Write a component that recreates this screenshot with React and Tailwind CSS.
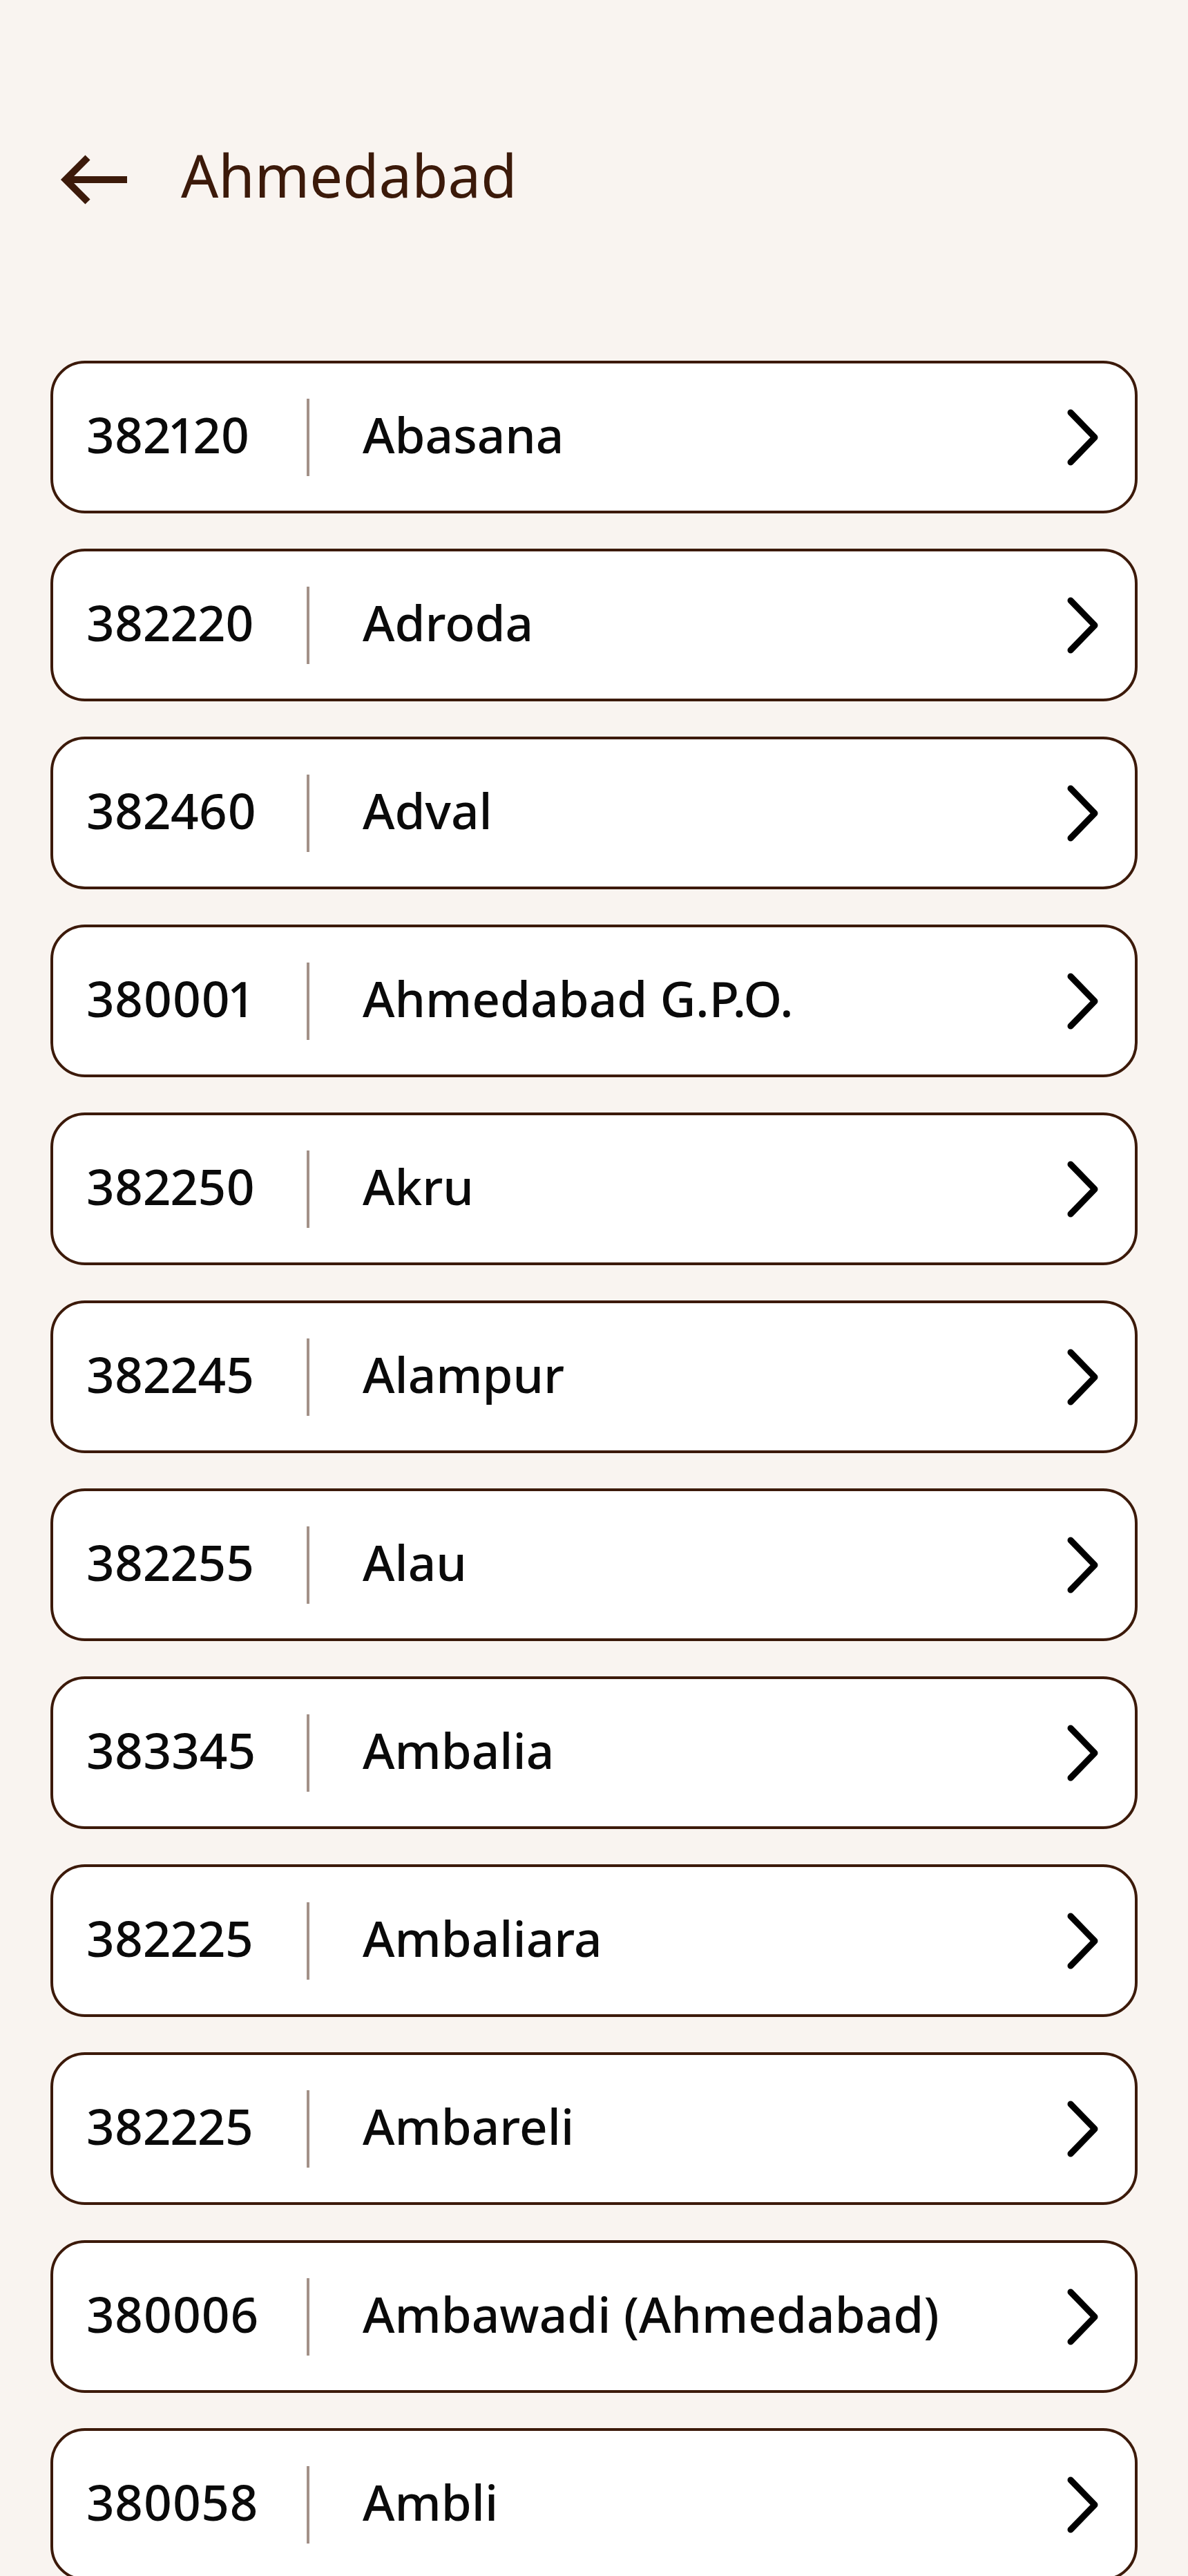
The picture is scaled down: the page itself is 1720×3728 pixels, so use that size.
const offices = [
  ['382120', 'Abasana'],
  ['382220', 'Adroda'],
  ['382460', 'Adval'],
  ['380001', 'Ahmedabad G.P.O.'],
  ['382250', 'Akru'],
  ['382245', 'Alampur'],
  ['382255', 'Alau'],
  ['383345', 'Ambalia'],
  ['382225', 'Ambaliara'],
  ['382225', 'Ambareli'],
  ['380006', 'Ambawadi (Ahmedabad)'],
  ['380058', 'Ambli']
]

function BackArrow() {
  return (
    <svg width="96" height="64" viewBox="0 0 96 64" fill="none" className="shrink-0 overflow-visible">
      <path d="M39 0 L7 32 L39 64" stroke="#3c1a0a" strokeWidth="10" strokeLinejoin="miter" strokeLinecap="butt" />
      <path d="M8 32 H96" stroke="#3c1a0a" strokeWidth="10" strokeLinecap="butt" />
    </svg>
  )
}

function Chevron() {
  return (
    <svg width="46" height="82" viewBox="0 0 46 82" fill="none" className="shrink-0">
      <path d="M5 5 L40 41 L5 77" stroke="#000" strokeWidth="9" strokeLinecap="round" strokeLinejoin="round" />
    </svg>
  )
}

function OfficeRow({ pin, name }) {
  return (
    <div className="flex items-center h-[221px] rounded-[50px] border-[4px] border-[#3c1a0a] bg-white pl-[48px] pr-[52px]">
      <span className="w-[319px] shrink-0 pb-[8px] text-[71px] leading-none font-medium proportional-nums text-[#0a0a0a]">{pin}</span>
      <div className="w-[4px] h-[112px] shrink-0 bg-[#a39188]" />
      <span className="ml-[77px] pb-[8px] text-[71px] leading-none font-medium text-[#0a0a0a]">{name}</span>
      <div className="ml-auto">
        <Chevron />
      </div>
    </div>
  )
}

export default function App() {
  return (
    <div className="min-h-screen bg-[#f9f4f0] font-['Noto_Sans',sans-serif]">
      <div className="flex items-start pt-[211px] pl-[88px]">
        <div className="mt-[17px]">
          <BackArrow />
        </div>
        <h1 className="ml-[78px] text-[85px] leading-none font-normal text-[#3c1a0a]">Ahmedabad</h1>
      </div>

      <div className="mt-[226px] mx-[73px] flex flex-col gap-[51px]">
        {offices.map(([pin, name], i) => (
          <OfficeRow key={i} pin={pin} name={name} />
        ))}
      </div>
    </div>
  )
}
